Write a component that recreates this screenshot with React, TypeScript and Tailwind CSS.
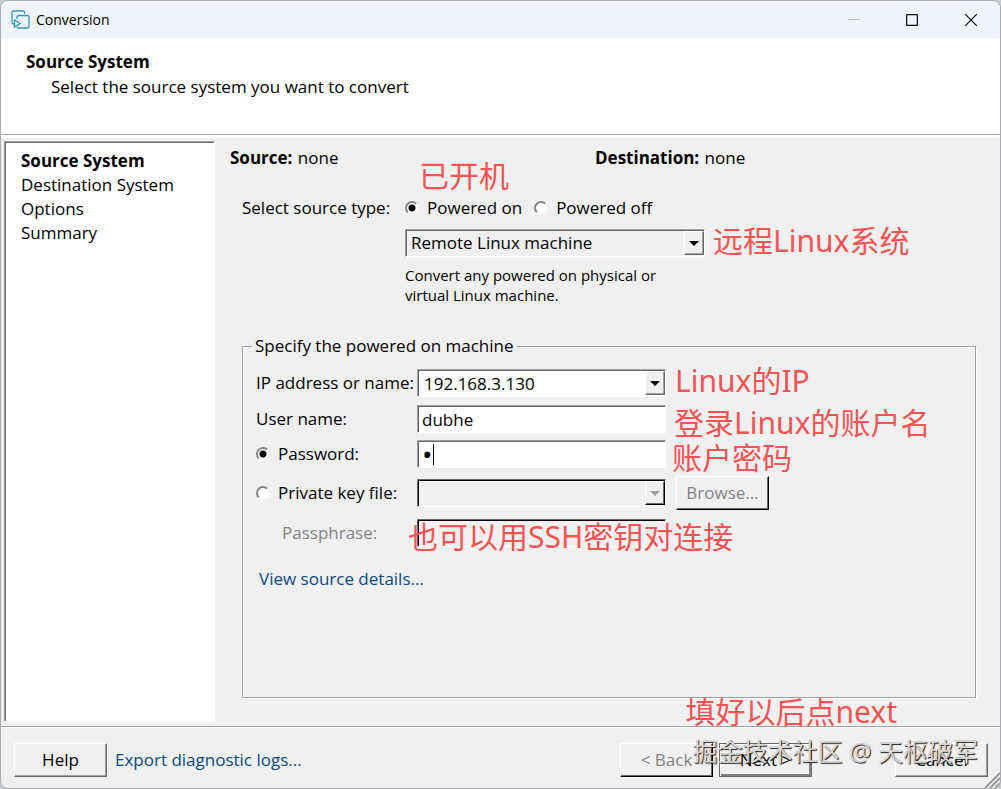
import type { ReactNode } from "react";

const sunken =
  "border border-t-[#a0a0a0] border-l-[#a0a0a0] border-b-white border-r-white shadow-[inset_1px_1px_0_#696969]";
const sunkenDisabled =
  "border border-t-[#696969] border-l-[#696969] border-b-white border-r-white shadow-[inset_1px_1px_0_#000]";

function Note({ className, children }: { className: string; children: ReactNode }) {
  return (
    <span
      lang="zh-CN"
      className={`pointer-events-none absolute z-10 whitespace-nowrap text-[30px] leading-9 text-[#f45454] font-['Noto_Sans','Noto_Sans_CJK_SC',sans-serif] ${className}`}
    >
      {children}
    </span>
  );
}

function Arrow({ disabled = false }: { disabled?: boolean }) {
  return (
    <span
      className={`pointer-events-none absolute right-[1px] top-[2px] bottom-[2px] flex w-5 items-center justify-center border border-t-white border-l-white bg-[#f0f0f0] ${
        disabled
          ? "border-r-black border-b-black shadow-[inset_-1px_-1px_0_#696969] text-[#a0a0a0]"
          : "border-r-[#696969] border-b-[#696969] shadow-[inset_-1px_-1px_0_#a0a0a0] text-black"
      }`}
    >
      <svg width="10" height="5" viewBox="0 0 10 5" fill="currentColor" aria-hidden="true">
        <path d="M0 0h10L5 5z" />
      </svg>
    </span>
  );
}

function Radio({ id, name, checked = false }: { id: string; name: string; checked?: boolean }) {
  return (
    <input
      type="radio"
      id={id}
      name={name}
      defaultChecked={checked}
      className="h-[14px] w-[14px] shrink-0 appearance-none rounded-full border-2 border-t-[#858585] border-l-[#858585] border-b-[#f8f8f8] border-r-[#f8f8f8] bg-white checked:bg-[radial-gradient(circle,#000_3px,#fff_4px)]"
    />
  );
}

function PushButton({
  children,
  disabled = false,
  focused = false,
}: {
  children: ReactNode;
  disabled?: boolean;
  focused?: boolean;
}) {
  return (
    <button
      type="button"
      disabled={disabled}
      className={`h-[34px] w-[93px] shrink-0 border text-[17px] leading-6 ${
        disabled
          ? "border-t-white border-l-white border-r-black border-b-black text-[#838383] shadow-[inset_-1px_-1px_0_#696969]"
          : focused
            ? "border-[#696969] shadow-[inset_1px_1px_0_#fff,inset_-2px_-2px_0_#808080]"
            : "border-t-white border-l-white border-r-[#696969] border-b-[#696969] shadow-[inset_-1px_-1px_0_#a0a0a0]"
      }`}
    >
      {children}
    </button>
  );
}

function TitleBar() {
  return (
    <header className="flex h-[37px] items-center bg-[#f0f3f9] pl-[10px]">
      <svg width="19" height="19" viewBox="0 0 19 19" fill="none" stroke="#3298bf" strokeWidth="1.3" aria-hidden="true">
        <path d="M13.500 4V2.500C13.500 1.500 13 1 12 1H2.500C1.500 1 1 1.500 1 2.500v10C1 13.500 1.500 14 2.500 14H3" />
        <path d="M6 9V7C6 6 6.500 5.500 7.500 5.500h9C17.500 5.500 18 6 18 7v9.500c0 1-.5 1.500-1.500 1.500h-9C6.500 18 6 17.500 6 17" />
        <path d="M3.500 10v7L9 13.500z" />
      </svg>
      <h1 className="ml-[6px] flex-1 text-[14px]">Conversion</h1>
      <button type="button" disabled aria-label="Minimize" className="flex h-full w-[58px] items-center justify-center">
        <svg width="12" height="12" viewBox="0 0 12 12" stroke="#b9bcc2" aria-hidden="true">
          <path d="M0 5.500h12" />
        </svg>
      </button>
      <button type="button" aria-label="Maximize" className="flex h-full w-[58px] items-center justify-center">
        <svg width="12" height="12" viewBox="0 0 12 12" fill="none" stroke="#111" strokeWidth="1.300" aria-hidden="true">
          <rect x=".6" y=".6" width="10.800" height="10.800" rx="1" />
        </svg>
      </button>
      <button type="button" aria-label="Close" className="flex h-full w-[59px] items-center justify-center">
        <svg width="12" height="12" viewBox="0 0 12 12" stroke="#111" strokeWidth="1.200" aria-hidden="true">
          <path d="M0 0l12 12M12 0L0 12" />
        </svg>
      </button>
    </header>
  );
}

function Steps() {
  return (
    <nav className={`ml-[3px] mt-[3px] mb-1 w-[211px] shrink-0 bg-white pl-4 pt-[7px] ${sunken}`}>
      <ol className="leading-6">
        <li className="font-bold" aria-current="step">Source System</li>
        <li>Destination System</li>
        <li>Options</li>
        <li>Summary</li>
      </ol>
    </nav>
  );
}

function MachineForm() {
  return (
    <fieldset className="relative ml-3 mr-6 mt-[29px] flex-1 border border-[#a0a0a0] pl-[13px] shadow-[1px_1px_0_#fff,inset_1px_1px_0_#fff]">
      <legend className="-ml-1 bg-[#f0f0f0] px-[3px] leading-6">Specify the powered on machine</legend>

      <div className="relative mt-[11px] flex h-7 items-center">
        <label htmlFor="host" className="w-[161px]">IP address or name:</label>
        <div className="relative h-7 w-[249px]">
          <input id="host" defaultValue="192.168.3.130" className={`h-full w-full bg-white pl-[6px] ${sunken}`} />
          <Arrow />
        </div>
        <Note className="left-[419px] -top-[6px]">Linux的IP</Note>
      </div>

      <div className="relative mt-2 flex h-7 items-center">
        <label htmlFor="user" className="w-[161px]">User name:</label>
        <input id="user" defaultValue="dubhe" className={`h-7 w-[249px] bg-white pl-1 ${sunken}`} />
        <Note className="left-[418px] top-0">登录Linux的账户名</Note>
      </div>

      <div className="relative mt-[7px] flex h-7 items-center">
        <div className="flex w-[161px] items-center gap-2">
          <Radio id="use-password" name="auth" checked />
          <label htmlFor="use-password">Password:</label>
        </div>
        <div className="relative h-7 w-[249px]">
          <input
            type="password"
            aria-label="Password"
            defaultValue="x"
            className={`h-full w-full bg-white pl-1 text-[28px] ${sunken}`}
          />
          <span className="absolute left-4 top-1 h-[21px] w-px bg-black" />
        </div>
        <Note className="left-[416px] top-0">账户密码</Note>
      </div>

      <div className="mt-2 flex h-[34px] items-center">
        <div className="flex w-[161px] items-center gap-2">
          <Radio id="use-key" name="auth" />
          <label htmlFor="use-key">Private key file:</label>
        </div>
        <div className="relative h-7 w-[249px]">
          <select
            disabled
            aria-label="Private key file"
            className={`h-full w-full appearance-none bg-[#f0f0f0] opacity-100 ${sunkenDisabled}`}
          />
          <Arrow disabled />
        </div>
        <div className="ml-[10px]">
          <PushButton disabled>Browse...</PushButton>
        </div>
      </div>

      <div className="relative mt-[9px] flex h-7 items-center">
        <label htmlFor="passphrase" className="w-[161px] pl-[26px] text-[#838383]">Passphrase:</label>
        <input id="passphrase" type="password" disabled className={`h-7 w-[249px] bg-[#f0f0f0] ${sunkenDisabled}`} />
        <Note className="left-[152px] top-0">也可以用SSH密钥对连接</Note>
      </div>

      <a href="#details" className="ml-[3px] mt-5 inline-block leading-6 text-[#0b4a80]">View source details...</a>
      <Note className="right-[78px] -bottom-[33px]">填好以后点next</Note>
    </fieldset>
  );
}

export default function App() {
  return (
    <div className="min-h-screen bg-[#c9cbd2] text-[17px] leading-6 text-black font-['Open_Sans','Noto_Sans_CJK_SC',sans-serif]">
      <div className="relative flex min-h-screen flex-col overflow-hidden rounded-lg border border-[#a9abb0] bg-[#f0f0f0]">
        <TitleBar />

        <section className="h-[97px] border-b border-[#a0a0a0] bg-white pl-[25px] pt-3">
          <h2 className="font-bold">Source System</h2>
          <p className="mt-px pl-[25px]">Select the source system you want to convert</p>
        </section>
        <div className="h-[3px] bg-white" />

        <div className="flex flex-1">
          <Steps />
          <main className="flex min-w-0 flex-1 flex-col pl-[15px] pt-2 pb-7">
            <div className="mr-[40px] grid grid-cols-2">
              <p><b className="mr-px">Source:</b> none</p>
              <p><b className="mr-px">Destination:</b> none</p>
            </div>

            <div className="relative ml-3 mt-[26px] flex items-center">
              <span className="w-[163px]">Select source type:</span>
              <Radio id="power-on" name="power" checked />
              <label htmlFor="power-on" className="ml-2 mr-3">Powered on</label>
              <Radio id="power-off" name="power" />
              <label htmlFor="power-off" className="ml-2">Powered off</label>
              <Note className="left-[177px] -top-[38px]">已开机</Note>
            </div>

            <div className="relative ml-[175px] mt-[9px] h-7 w-[300px]">
              <select
                aria-label="Source type"
                className={`h-full w-full appearance-none bg-[#f0f0f0] pl-[5px] ${sunken}`}
              >
                <option>Remote Linux machine</option>
              </select>
              <Arrow />
              <Note className="left-[308px] -top-[6px]">远程Linux系统</Note>
            </div>
            <p className="ml-[175px] mt-2 w-[270px] text-[15px] leading-5">
              Convert any powered on physical or virtual Linux machine.
            </p>

            <MachineForm />
          </main>
        </div>

        <footer className="relative flex h-[62px] items-center border-t border-[#a0a0a0] pl-[13px] pr-3 pt-1 shadow-[inset_0_1px_0_#fff]">
          <PushButton>Help</PushButton>
          <a href="#logs" className="ml-2 mr-auto text-[#0b4a80]">Export diagnostic logs...</a>
          <PushButton disabled>&lt; Back</PushButton>
          <div className="ml-[6px] mr-[83px]">
            <PushButton focused>Next &gt;</PushButton>
          </div>
          <PushButton>Cancel</PushButton>
          <span
            lang="zh-CN"
            className="pointer-events-none absolute right-[22px] top-[6px] whitespace-nowrap text-[25px] leading-9 text-[#d4d4d4] [text-shadow:1px_1px_1px_#222]"
          >
            掘金技术社区 @ 天枢破军
          </span>
          <svg className="absolute right-0 bottom-0" width="16" height="16" viewBox="0 0 16 16" stroke="#999" strokeWidth="2" aria-hidden="true">
            <path d="M1 16L16 1M6 16L16 6M11 16l5-5" />
          </svg>
        </footer>
      </div>
    </div>
  );
}
